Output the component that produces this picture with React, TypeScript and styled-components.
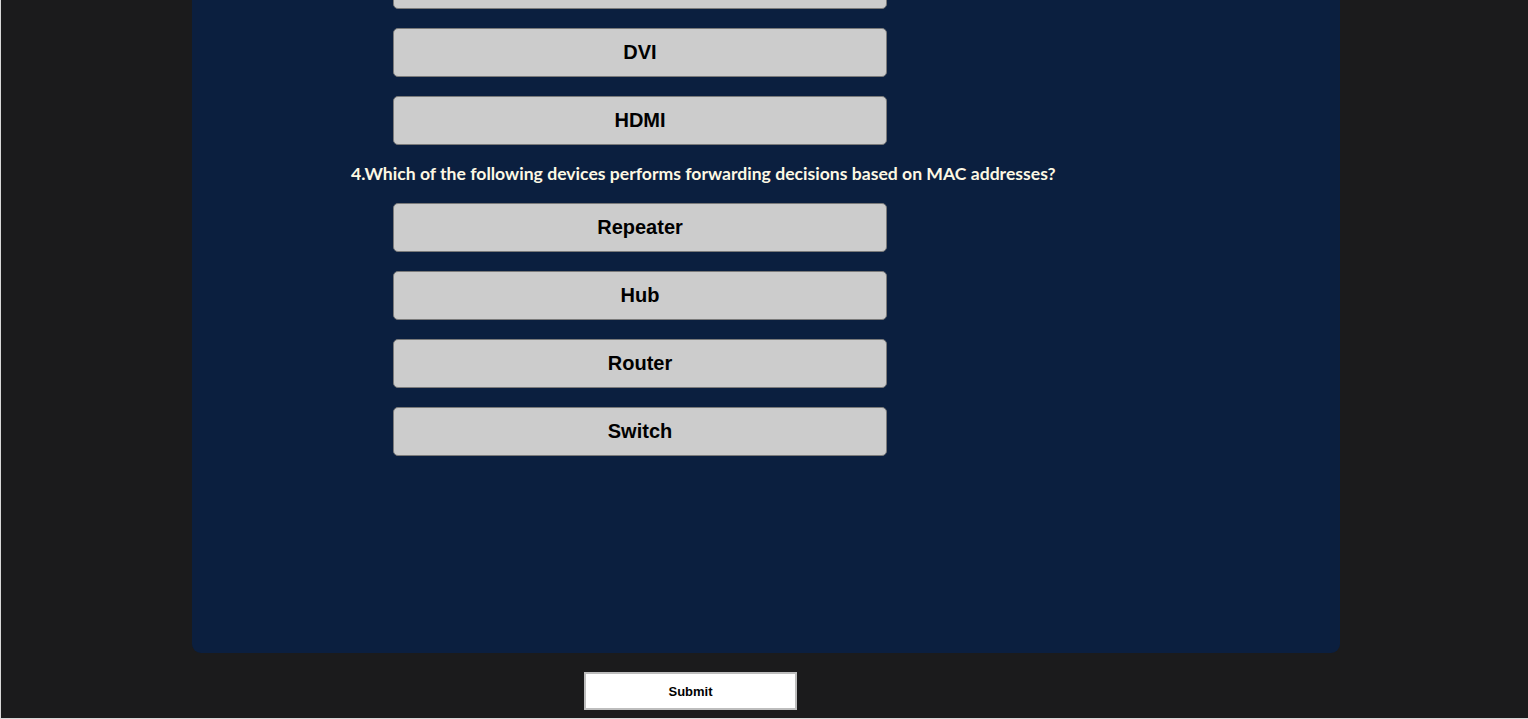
import React from "react";
import styled, { createGlobalStyle } from "styled-components";

const Global = createGlobalStyle`
  html, body { margin: 0; padding: 0; background: #1b1b1c; overflow: hidden; }
  * { box-sizing: border-box; }
`;

const Page = styled.div`
  width: 1528px;
  height: 719px;
  overflow: hidden;
  border-left: 1px solid #d8d8d8;
  border-bottom: 1px solid #d8d8d8;
  display: flex;
  flex-direction: column;
`;

const Card = styled.div`
  margin: -60px 0 0 191px;
  width: 1148px;
  background: #0b1f3f;
  border-radius: 0 0 9px 9px;
  padding: 20px 0 197px 0;
  display: flex;
  flex-direction: column;
  gap: 19px;
`;

const Question = styled.div`
  height: 20px;
  padding-left: 159px;
  font-family: "Lato", "Open Sans", sans-serif;
  font-weight: 700;
  font-size: 17.6px;
  line-height: 20px;
  color: #fdf8e4;
  white-space: nowrap;
`;

const Option = styled.button`
  margin-left: 201px;
  width: 494px;
  height: 49px;
  background: #cccccc;
  border: 1px solid #7a7a7a;
  border-radius: 5px;
  font-family: "Liberation Sans", Arial, sans-serif;
  font-weight: 700;
  font-size: 20px;
  color: #000;
  padding: 0;
  display: flex;
  align-items: center;
  justify-content: center;
`;

const SubmitRow = styled.div`
  margin-top: 19px;
  padding-left: 583px;
`;

const Submit = styled.button`
  width: 213px;
  height: 38px;
  background: #fff;
  border: 2px solid #bdbdbd;
  font-family: "Liberation Sans", Arial, sans-serif;
  font-weight: 700;
  font-size: 13px;
  color: #000;
  padding: 0;
`;

export default function App() {
  return (
    <>
      <Global />
      <Page>
        <Card>
          <Option aria-label="VGA" />
          <Option>DVI</Option>
          <Option>HDMI</Option>
          <Question>4.Which of the following devices performs forwarding decisions based on MAC addresses?</Question>
          <Option>Repeater</Option>
          <Option>Hub</Option>
          <Option>Router</Option>
          <Option>Switch</Option>
        </Card>
        <SubmitRow>
          <Submit>Submit</Submit>
        </SubmitRow>
      </Page>
    </>
  );
}
